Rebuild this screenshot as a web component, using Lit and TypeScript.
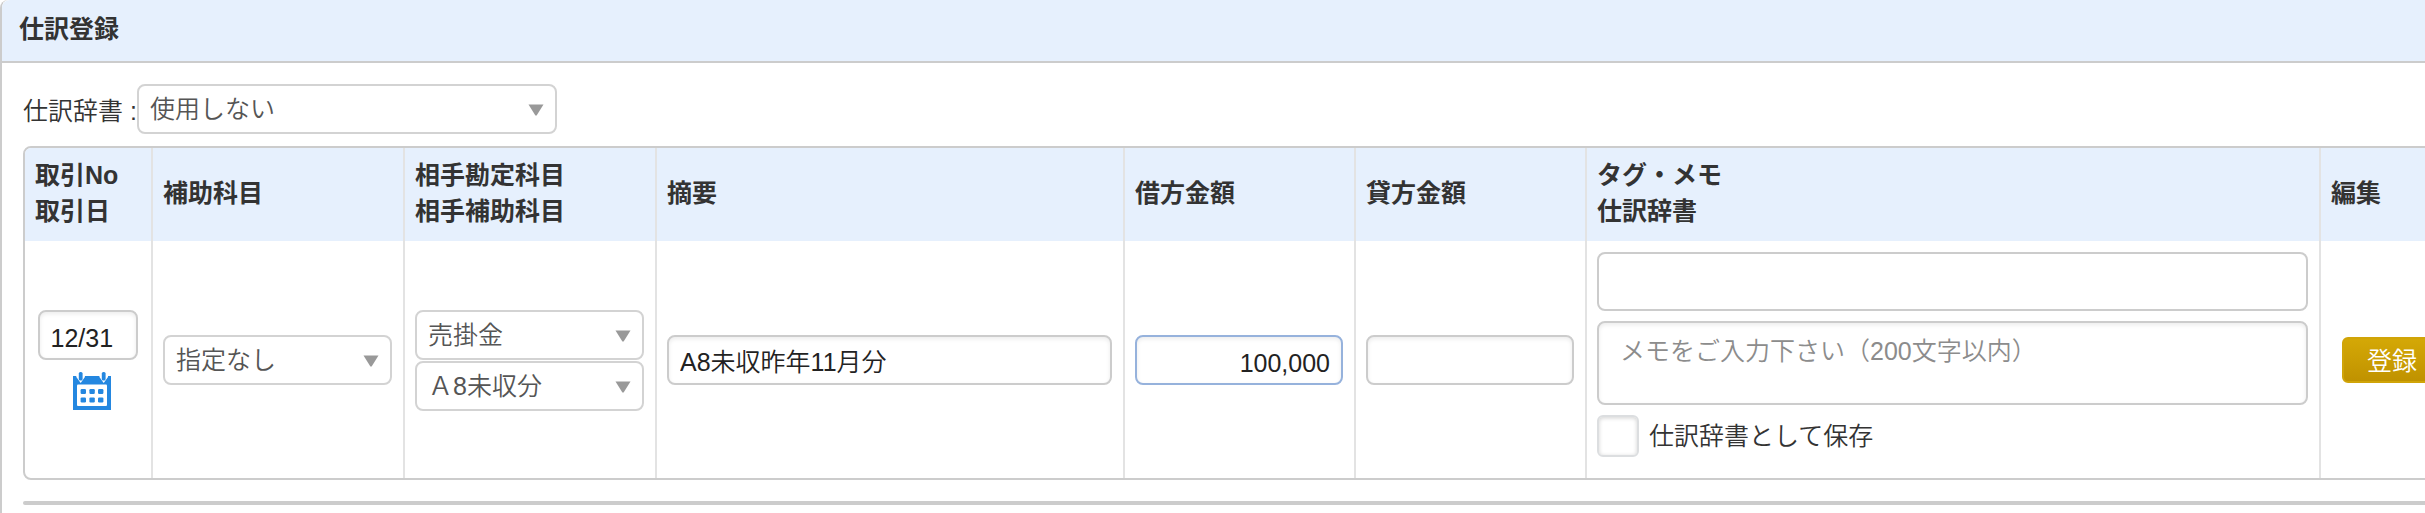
import { LitElement, html, css, nothing } from "lit";
import { customElement, property } from "lit/decorators.js";

const textFont = css`"Liberation Sans", "Noto Sans CJK JP", sans-serif`;

@customElement("select-box")
class SelectBox extends LitElement {
  @property() label = "";
  @property() caption = "";
  @property() value = "";

  static styles = css`
    :host {
      display: flex;
      align-items: center;
    }
    .caption {
      flex: none;
      padding-top: 4px;
    }
    .box {
      display: grid;
      flex: 1;
      align-items: center;
    }
    .field {
      grid-area: 1 / 1;
      box-sizing: border-box;
      width: 100%;
      height: 50px;
      margin: 0;
      padding: 0 36px 0 11px;
      border: 2px solid #d3d3d3;
      border-radius: 8px;
      appearance: none;
      background: #fff;
      color: #555;
      font: 350 25px ${textFont};
    }
    .arrow {
      grid-area: 1 / 1;
      justify-self: end;
      width: 16px;
      height: 14px;
      margin-right: 13px;
      pointer-events: none;
    }
  `;

  render() {
    return html`
      ${this.caption ? html`<label class="caption" for="field">${this.caption}</label>` : nothing}
      <div class="box">
        <select class="field" id="field" aria-label=${this.label || nothing}>
          <option>${this.value}</option>
        </select>
        <svg class="arrow" viewBox="0 0 16 14" aria-hidden="true">
          <path d="M0.5 2.5h15L8.6 13.5H7.4z" fill="#999" />
        </svg>
      </div>
    `;
  }
}

@customElement("app-root")
class AppRoot extends LitElement {
  static styles = css`
    :host {
      display: block;
      overflow: hidden;
      background: #fff;
      color: #333;
      font: 350 25px/36px ${textFont};
    }
    .panel {
      border-left: 2px solid #ccc;
      border-top-left-radius: 8px;
    }
    .title {
      margin: 0;
      padding: 11px 17px 14px;
      border-bottom: 2px solid #ccc;
      border-top-left-radius: 8px;
      background: #e6f0fd;
      font-size: 25px;
      font-weight: 700;
      line-height: 36px;
    }
    .body {
      padding: 21px 0 9px 21px;
    }
    .dictionary {
      width: 534px;
      margin-bottom: 12px;
    }
    .grid {
      width: calc(100% + 40px);
      border: 2px solid #ccc;
      border-radius: 8px;
      border-spacing: 0;
      table-layout: fixed;
    }
    .day { width: 126px; }
    .account { width: 252px; }
    .summary { width: 468px; }
    .amount { width: 231px; }
    .edit { width: 144px; }
    th, td {
      box-sizing: border-box;
      padding: 9px 11px 12px 10px;
      vertical-align: middle;
    }
    th {
      background: #e6f0fd;
      font-weight: 700;
      text-align: left;
    }
    th:first-child { border-top-left-radius: 6px; }
    th + th, td + td { border-left: 2px solid #e3e3e3; }
    td { padding-top: 11px; padding-bottom: 10px; }
    .date {
      display: flex;
      flex-direction: column;
      align-items: center;
      gap: 12px;
    }
    .input {
      display: block;
      box-sizing: border-box;
      width: 100%;
      height: 50px;
      margin: 0;
      padding: 0 11px;
      border: 2px solid #ccc;
      border-radius: 8px;
      background: #fff;
      box-shadow: inset 0 2px 4px rgba(0, 0, 0, 0.08);
      color: #222;
      font: 350 25px ${textFont};
    }
    .input.short {
      width: 100px;
      padding-top: 6px;
    }
    .input.money {
      padding-top: 6px;
      text-align: right;
    }
    .input.active { border-color: #96b2dc; }
    .input.tag {
      height: 59px;
      box-shadow: none;
    }
    .input.memo {
      height: 84px;
      padding: 10px 21px;
      line-height: 36px;
      resize: none;
    }
    .input::placeholder {
      color: #8c8c8c;
      opacity: 1;
    }
    .calendar {
      width: 38px;
      height: 38px;
      margin-left: 8px;
      padding: 0;
      border: 0;
      background: none;
    }
    .calendar svg { display: block; }
    .stack {
      display: grid;
      gap: 1px;
    }
    .notes {
      display: grid;
      gap: 10px;
      padding-bottom: 11px;
    }
    .save {
      display: flex;
      align-items: center;
      gap: 10px;
    }
    .check {
      width: 42px;
      height: 42px;
      margin: 0;
      border: 2px solid #dcdee0;
      border-radius: 6px;
      appearance: none;
      background: #fff;
      box-shadow: inset 0 1px 4px rgba(0, 0, 0, 0.18);
    }
    .register {
      display: block;
      height: 46px;
      margin-left: 11px;
      padding: 0 23px 2px;
      border: 2px solid #d0a408;
      border-radius: 6px;
      background: linear-gradient(#d4a806, #c09200);
      color: #fff;
      font: 350 25px ${textFont};
    }
    .rule {
      height: 4px;
      margin: 21px 0 0;
      border: 0;
      border-radius: 2px 0 0 2px;
      background: #ccc;
    }
  `;

  render() {
    return html`
      <section class="panel">
        <h1 class="title">仕訳登録</h1>
        <div class="body">
          <select-box class="dictionary" caption="仕訳辞書 :" value="使用しない"></select-box>
          <table class="grid">
            <colgroup>
              <col class="day" />
              <col class="account" />
              <col class="account" />
              <col class="summary" />
              <col class="amount" />
              <col class="amount" />
              <col />
              <col class="edit" />
            </colgroup>
            <thead>
              <tr>
                <th>取引No<br />取引日</th>
                <th>補助科目</th>
                <th>相手勘定科目<br />相手補助科目</th>
                <th>摘要</th>
                <th>借方金額</th>
                <th>貸方金額</th>
                <th>タグ・メモ<br />仕訳辞書</th>
                <th>編集</th>
              </tr>
            </thead>
            <tbody>
              <tr>
                <td>
                  <div class="date">
                    <input class="input short" aria-label="取引日" value="12/31" />
                    <button class="calendar" type="button" aria-label="カレンダー">
                      <svg width="38" height="38" viewBox="0 0 38 38">
                        <path d="M0 4h38v34H0z" fill="#2487e0" />
                        <path d="M3.3 0h8.6v5L7.7 11 3.3 5zM26.4 0H35v5l-4.3 6-4.3-6z" fill="#fff" />
                        <rect x="5.8" y="0" width="3.8" height="8.5" rx="1.6" fill="#2487e0" />
                        <rect x="28.8" y="0" width="3.8" height="8.5" rx="1.6" fill="#2487e0" />
                        <rect x="4" y="12.5" width="30" height="21.5" rx="1" fill="#fff" />
                        <g fill="#2487e0">
                          <rect x="7.6" y="17" width="5.4" height="5" rx="1.2" />
                          <rect x="16.4" y="17" width="5.4" height="5" rx="1.2" />
                          <rect x="25" y="17" width="5.4" height="5" rx="1.2" />
                          <rect x="7.6" y="25.4" width="5.4" height="5" rx="1.2" />
                          <rect x="16.4" y="25.4" width="5.4" height="5" rx="1.2" />
                          <rect x="25" y="25.4" width="5.4" height="5" rx="1.2" />
                        </g>
                      </svg>
                    </button>
                  </div>
                </td>
                <td><select-box label="補助科目" value="指定なし"></select-box></td>
                <td>
                  <div class="stack">
                    <select-box label="相手勘定科目" value="売掛金"></select-box>
                    <select-box label="相手補助科目" value="Ａ8未収分"></select-box>
                  </div>
                </td>
                <td><input class="input" aria-label="摘要" value="A8未収昨年11月分" /></td>
                <td><input class="input money active" aria-label="借方金額" value="100,000" /></td>
                <td><input class="input money" aria-label="貸方金額" /></td>
                <td>
                  <div class="notes">
                    <input class="input tag" aria-label="タグ" />
                    <textarea class="input memo" aria-label="メモ" placeholder="メモをご入力下さい（200文字以内）"></textarea>
                    <label class="save"><input class="check" type="checkbox" />仕訳辞書として保存</label>
                  </div>
                </td>
                <td><button class="register" type="button">登録</button></td>
              </tr>
            </tbody>
          </table>
          <hr class="rule" />
        </div>
      </section>
    `;
  }
}
